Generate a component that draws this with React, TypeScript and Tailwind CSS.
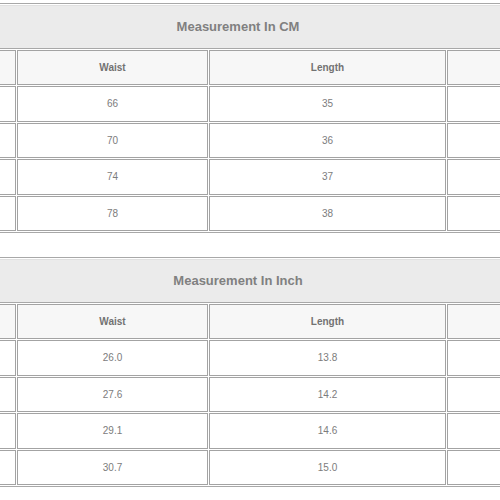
import React from "react";

type Row = { size: string; waist: string; length: string; hip: string };

const cmRows: Row[] = [
  { size: "S", waist: "66", length: "35", hip: "90" },
  { size: "M", waist: "70", length: "36", hip: "94" },
  { size: "L", waist: "74", length: "37", hip: "98" },
  { size: "XL", waist: "78", length: "38", hip: "102" },
];

const inchRows: Row[] = [
  { size: "S", waist: "26.0", length: "13.8", hip: "35.4" },
  { size: "M", waist: "27.6", length: "14.2", hip: "37.0" },
  { size: "L", waist: "29.1", length: "14.6", hip: "38.6" },
  { size: "XL", waist: "30.7", length: "15.0", hip: "40.2" },
];

function SizeTable({ title, rows }: { title: string; rows: Row[] }) {
  const th =
    "h-[35px] border border-[#a3a3a3] bg-[#f7f7f7] text-center align-middle text-[10px] font-bold text-[#727272] p-0";
  const td =
    "h-[35.5px] border border-[#a3a3a3] bg-white text-center align-middle text-[10px] text-[#7c7c7c] p-0";
  return (
    <table className="ml-[-164px] w-[804px] table-fixed border-separate border-spacing-[1px] border border-[#a8a8a8] bg-white">
      <colgroup>
        <col className="w-[178px]" />
        <col className="w-[191px]" />
        <col className="w-[237px]" />
        <col className="w-[191px]" />
      </colgroup>
      <tbody>
        <tr>
          <td
            colSpan={4}
            className="h-[44px] border border-[#e0e0e0] border-b-[#a8a8a8] bg-[#ebebeb] text-center align-middle text-[13px] font-bold text-[#808080] p-0"
          >
            {title}
          </td>
        </tr>
        <tr>
          <td className={th}>Size</td>
          <td className={th}>Waist</td>
          <td className={th}>Length</td>
          <td className={th}>Hip</td>
        </tr>
        {rows.map((r) => (
          <tr key={r.size}>
            <td className={td}>{r.size}</td>
            <td className={td}>{r.waist}</td>
            <td className={td}>{r.length}</td>
            <td className={td}>{r.hip}</td>
          </tr>
        ))}
      </tbody>
    </table>
  );
}

export default function App() {
  return (
    <div
      className="w-[500px] h-[500px] overflow-hidden bg-white pt-[3px]"
      style={{ fontFamily: '"Liberation Sans", Arial, sans-serif' }}
    >
      <SizeTable title="Measurement In CM" rows={cmRows} />
      <div className="h-[24px]" />
      <SizeTable title="Measurement In Inch" rows={inchRows} />
    </div>
  );
}
